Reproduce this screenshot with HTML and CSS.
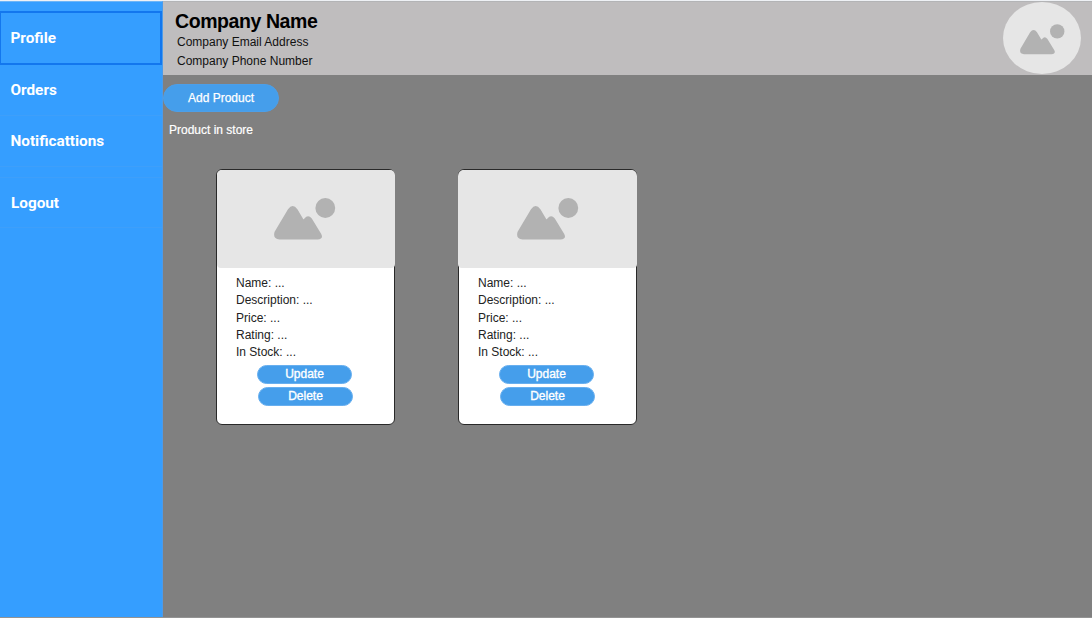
FILE: index.html
```html
<!DOCTYPE html>
<html lang="en">
<head>
<meta charset="utf-8">
<title>Company Name</title>
<link rel="stylesheet" href="styles.css">
</head>
<body>
<svg class="defs" width="0" height="0" aria-hidden="true">
  <symbol id="picture" viewBox="0 0 62 43">
    <path d="M14 12.200Q18.700 5.800 23.400 12.200L29.200 21.900Q29.700 22.700 30.400 21.600Q34 16.800 37.800 21.400L47.100 36.700Q50 42 43.500 42.500H5.500Q-1.500 42 .6 34.800Z"/>
    <circle cx="51.300" cy="11" r="9.900"/>
  </symbol>
</svg>
<div class="app">
  <nav class="sidebar">
    <a class="nav-item active">Profile</a>
    <a class="nav-item">Orders</a>
    <a class="nav-item">Notificattions</a>
    <a class="nav-item logout">Logout</a>
  </nav>
  <main class="main">
    <header class="header">
      <div class="company">
        <h1 class="name">Company Name</h1>
        <p class="contact">Company Email Address</p>
        <p class="contact">Company Phone Number</p>
      </div>
      <div class="avatar"><svg class="avatar-icon"><use href="#picture"/></svg></div>
    </header>
    <button class="button add">Add Product</button>
    <h2 class="heading">Product in store</h2>
    <section class="products">
      <article class="card">
        <div class="image framed"><svg class="image-icon"><use href="#picture"/></svg></div>
        <div class="details">
          <p>Name: ...</p><p>Description: ...</p><p>Price: ...</p><p>Rating: ...</p><p>In Stock: ...</p>
        </div>
        <div class="actions">
          <button class="button small">Update</button>
          <button class="button small delete">Delete</button>
        </div>
      </article>
      <article class="card">
        <div class="image"><svg class="image-icon"><use href="#picture"/></svg></div>
        <div class="details">
          <p>Name: ...</p><p>Description: ...</p><p>Price: ...</p><p>Rating: ...</p><p>In Stock: ...</p>
        </div>
        <div class="actions">
          <button class="button small">Update</button>
          <button class="button small delete">Delete</button>
        </div>
      </article>
    </section>
  </main>
</div>
</body>
</html>
```
FILE: styles.css
```css
* { box-sizing: border-box; margin: 0; padding: 0; }
body { height: 618px; overflow: hidden; background: #e9edf2; font: 12px/17.25px "Liberation Sans", Arial, sans-serif; }
.defs { display: block; }
.app { display: flex; height: 618px; border-top: 1px solid #eef1f5; border-bottom: 1px solid #939393; }
.sidebar { width: 163px; background: #359eff; border-top: 1px solid #6db5f7; border-right: 1px solid #4c9bea; padding-top: 9px; }
.nav-item { display: flex; align-items: center; width: 162px; height: 51px; padding-left: 10.5px; border-bottom: 1px solid #3e9ffa; color: #fff; font: bold 15.3px/20px Roboto, sans-serif; }
.nav-item.active { height: 54px; padding-left: 9.5px; border: 2px solid #1377ee; border-left-width: 1px; }
.nav-item.logout { margin-top: 10px; padding-left: 11px; border-top: 1px solid #3e9ffa; }
.main { flex: 1; background: #808080; }
.header { display: flex; justify-content: space-between; height: 74px; padding-right: 11px; background: #bfbdbe; border-top: 1px solid #b3b4b6; }
.company { padding: 8px 0 0 12px; }
.name { font-size: 19.5px; line-height: 23px; letter-spacing: -.42px; color: #000; }
.contact { padding-left: 2px; line-height: 19px; color: #111; }
.avatar { display: flex; width: 78px; height: 72px; border-radius: 50%; background: #e6e6e6; padding: 21px 0 0 16.5px; }
.image-icon, .avatar-icon { display: block; fill: #b2b2b2; }
.avatar-icon { width: 45px; height: 32px; }
.button { display: block; border: 1px solid #4c9fe9; background: #459eeb; color: #fff; font: 12px/14px "Liberation Sans", Arial, sans-serif; -webkit-text-stroke: .25px #fff; text-align: center; }
.add { width: 116px; height: 28px; margin-top: 9px; border-radius: 14px; }
.heading { margin: 9px 0 0 6px; color: #fff; font-size: 12px; font-weight: 400; line-height: 18px; -webkit-text-stroke: .2px #fff; }
.products { display: flex; gap: 63px; padding: 30px 0 0 53px; }
.card { width: 179px; height: 256px; border: 1px solid #292929; border-radius: 6px; background: #fff; }
.image { height: 98px; margin: 0 -1px; padding: 27px 0 0 58.5px; border-radius: 6px 6px 4px 4px; background: #e6e6e6; }
.image.framed { margin: 0 -.5px; padding-left: 57.5px; border-radius: 5px 5px 4px 4px; }
.image-icon { width: 62px; height: 43px; }
.details { padding: 7px 0 0 19px; color: #222; }
.actions { display: flex; flex-direction: column; gap: 3px; padding: 4px 0 0 40px; }
.small { width: 95px; height: 19px; padding-bottom: 2px; border: 1px solid #68afef; border-radius: 10px; -webkit-text-stroke-width: .35px; }
.delete { margin-left: 1px; }
```
